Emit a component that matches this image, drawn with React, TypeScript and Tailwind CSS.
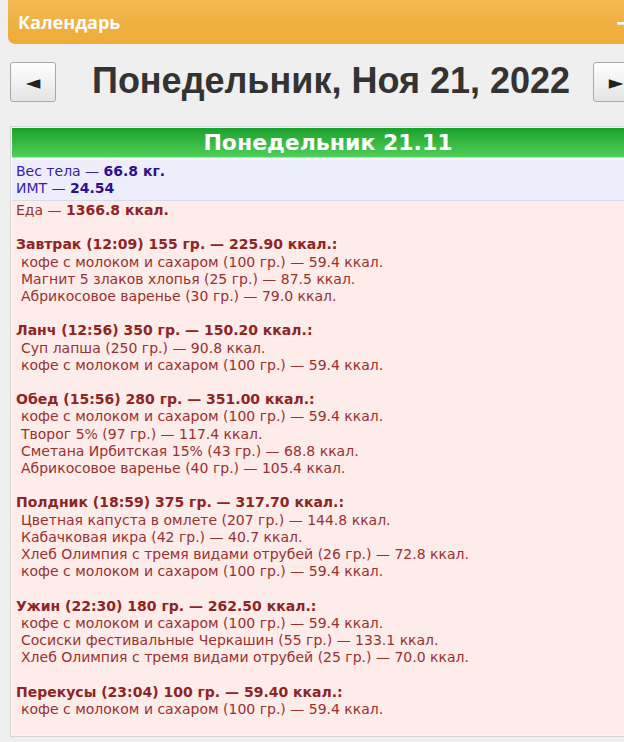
import React from "react"

// ============================================================================
// ДАННЫЕ
// ============================================================================

type Meal = { title: string; items: string[] }

const MEALS: Meal[] = [
    {
        title: "Завтрак (12:09) 155 гр. — 225.90 ккал.:",
        items: [
            "кофе с молоком и сахаром (100 гр.) — 59.4 ккал.",
            "Магнит 5 злаков хлопья (25 гр.) — 87.5 ккал.",
            "Абрикосовое варенье (30 гр.) — 79.0 ккал.",
        ],
    },
    {
        title: "Ланч (12:56) 350 гр. — 150.20 ккал.:",
        items: [
            "Суп лапша (250 гр.) — 90.8 ккал.",
            "кофе с молоком и сахаром (100 гр.) — 59.4 ккал.",
        ],
    },
    {
        title: "Обед (15:56) 280 гр. — 351.00 ккал.:",
        items: [
            "кофе с молоком и сахаром (100 гр.) — 59.4 ккал.",
            "Творог 5% (97 гр.) — 117.4 ккал.",
            "Сметана Ирбитская 15% (43 гр.) — 68.8 ккал.",
            "Абрикосовое варенье (40 гр.) — 105.4 ккал.",
        ],
    },
    {
        title: "Полдник (18:59) 375 гр. — 317.70 ккал.:",
        items: [
            "Цветная капуста в омлете (207 гр.) — 144.8 ккал.",
            "Кабачковая икра (42 гр.) — 40.7 ккал.",
            "Хлеб Олимпия с тремя видами отрубей (26 гр.) — 72.8 ккал.",
            "кофе с молоком и сахаром (100 гр.) — 59.4 ккал.",
        ],
    },
    {
        title: "Ужин (22:30) 180 гр. — 262.50 ккал.:",
        items: [
            "кофе с молоком и сахаром (100 гр.) — 59.4 ккал.",
            "Сосиски фестивальные Черкашин (55 гр.) — 133.1 ккал.",
            "Хлеб Олимпия с тремя видами отрубей (25 гр.) — 70.0 ккал.",
        ],
    },
    {
        title: "Перекусы (23:04) 100 гр. — 59.40 ккал.:",
        items: ["кофе с молоком и сахаром (100 гр.) — 59.4 ккал."],
    },
]

// ============================================================================
// КОМПОНЕНТЫ
// ============================================================================

function NavButton({ children }: { children: React.ReactNode }) {
    return (
        <button className="w-[46px] h-[40px] shrink-0 flex items-center justify-center rounded-[3px] border border-[#a9a9a9] bg-gradient-to-b from-[#ffffff] to-[#e4e4e4] text-[#222] text-[19px] font-['DejaVu_Sans',sans-serif]">
            {children}
        </button>
    )
}

export default function App() {
    return (
        <div className="w-[624px] h-[742px] overflow-hidden bg-[#efefef] font-['DejaVu_Sans',sans-serif]">
            {/* Header */}
            <div className="ml-2 w-[640px] h-[44px] rounded-b-[7px] bg-gradient-to-b from-[#f3b850] to-[#eeab35] flex items-center justify-between pl-[10px] pr-[14px] font-['Open_Sans',sans-serif]">
                <span className="text-white font-bold text-[18px] leading-none">Календарь</span>
                <span className="text-white font-bold text-[22px] leading-none mr-[5px]">−</span>
            </div>

            {/* Date nav */}
            <div className="flex items-center mt-[18px] ml-[10px] w-[700px]">
                <NavButton>◄</NavButton>
                <h1 className="ml-[36px] mr-[23px] text-[36px] leading-none font-bold text-[#333] font-['Liberation_Sans',sans-serif] whitespace-nowrap -mt-[3px]">
                    Понедельник, Ноя 21, 2022
                </h1>
                <NavButton>►</NavButton>
            </div>

            {/* Day panel */}
            <div className="mt-[24px] ml-[10px] w-[640px] border border-[#d6d6d6] bg-[#f7f7f7] p-px">
                <div className="h-[30px] bg-gradient-to-b from-[#17a22c] to-[#4ecf58] border-b border-[#b9dcb9] flex items-center justify-center pr-[4px]">
                    <span className="text-white font-bold text-[22px] leading-none">Понедельник 21.11</span>
                </div>

                <div className="mt-[2px] bg-[#eeedfc] border-b border-[#dcd8e6] px-[4px] pt-[3px] pb-[3px] text-[14px] leading-[17px] text-[#3b1fa3]">
                    <div>Вес тела — <b className="text-[#2c0f93]">66.8 кг.</b></div>
                    <div>ИМТ — <b className="text-[#2c0f93]">24.54</b></div>
                </div>

                <div className="bg-[#fdecea] px-[4px] pt-[1px] pb-[17px] text-[14px] leading-[17.2px] text-[#9b3030]">
                    <div>Еда — <b className="text-[#8f2424]">1366.8 ккал.</b></div>
                    {MEALS.map((meal) => (
                        <div key={meal.title} className="mt-[17.2px]">
                            <div className="font-bold text-[#8f2424]">{meal.title}</div>
                            {meal.items.map((item, i) => (
                                <div key={i} className="pl-[5px]">{item}</div>
                            ))}
                        </div>
                    ))}
                </div>
            </div>
        </div>
    )
}
